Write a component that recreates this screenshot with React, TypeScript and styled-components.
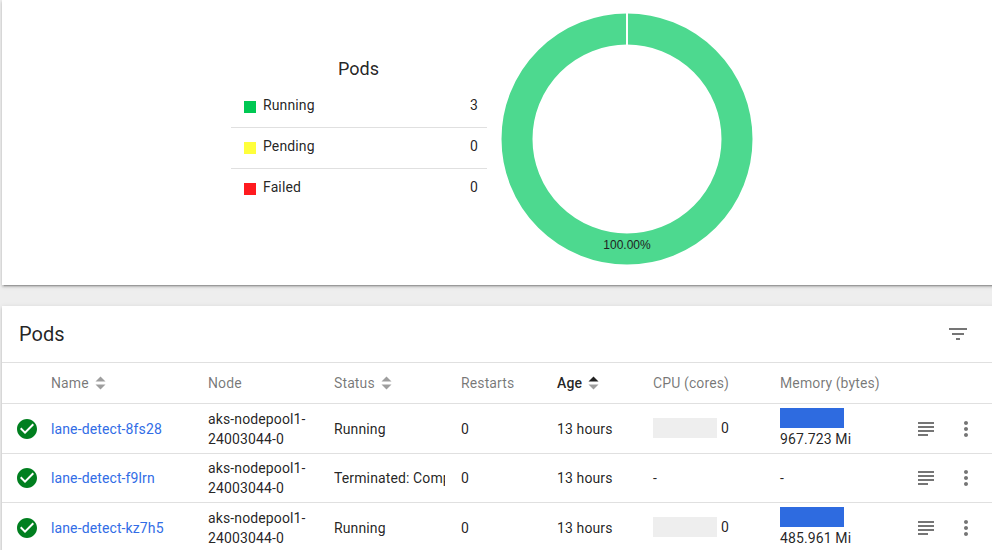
import React from "react";
import styled, { createGlobalStyle } from "styled-components";

const GlobalStyle = createGlobalStyle`
  html, body {
    margin: 0;
    padding: 0;
    height: 550px;
    overflow: hidden;
    background: #eeeeee;
    font-family: Roboto, "Liberation Sans", sans-serif;
    font-size: 14px;
    letter-spacing: 0.12px;
    color: rgba(0, 0, 0, 0.87);
  }
`;

const Page = styled.div`
  display: flex;
  flex-direction: column;
  gap: 21px;
  width: 1000px;
  height: 550px;
  padding-left: 2px;
  box-sizing: border-box;
  overflow: hidden;
`;

const Card = styled.section`
  background: #fff;
  box-shadow: 0 3px 1px -2px rgba(0, 0, 0, 0.2), 0 2px 2px 0 rgba(0, 0, 0, 0.14),
    0 1px 5px 0 rgba(0, 0, 0, 0.12);
`;

const ChartCard = styled(Card)`
  display: flex;
  align-items: flex-start;
  gap: 14px;
  height: 285px;
  flex: none;
  padding-left: 229px;
  box-sizing: border-box;
`;

const Legend = styled.div`
  width: 256px;
  margin-top: 55px;
`;

const LegendTitle = styled.div`
  font-size: 18px;
  line-height: 27px;
  text-align: center;
  letter-spacing: 0;
  margin: 0 1px 5px 0;
`;

const LegendRow = styled.div<{ $last?: boolean }>`
  display: flex;
  align-items: center;
  height: 40px;
  padding: 0 9px 0 13px;
  border-bottom: ${(p) => (p.$last ? "none" : "1px solid #e0e0e0")};
`;

const Swatch = styled.span<{ $color: string }>`
  width: 12px;
  height: 12px;
  margin: 0 7px 0 0;
  background: ${(p) => p.$color};
`;

const LegendLabel = styled.span`
  flex: 1;
  line-height: 20px;
  margin-bottom: 4px;
`;

const LegendCount = styled(LegendLabel)`
  flex: none;
`;

const Donut = styled.svg`
  display: block;
  flex: none;
  margin-top: 13px;
`;

const DonutLabel = styled.text`
  font-family: "Liberation Sans", Arial, sans-serif;
  font-size: 12px;
  letter-spacing: 0;
  fill: #222;
  text-anchor: middle;
`;

const TableCard = styled(Card)`
  flex: 1;
`;

const TitleBar = styled.header`
  display: flex;
  align-items: center;
  justify-content: space-between;
  height: 56px;
  padding: 0 30px 0 17px;
  border-bottom: 1px solid #e0e0e0;
`;

const Title = styled.h2`
  margin: 0;
  font-size: 20px;
  font-weight: 400;
  letter-spacing: 0;
`;

const Row = styled.div`
  display: grid;
  grid-template-columns: 49px 157px 126px 127px 96px 96px 127px 126px 40px 40px 1fr;
  align-items: center;
  padding: 4px 0;
  border-bottom: 1px solid #e0e0e0;
`;

const HeaderRow = styled(Row)`
  height: 40px;
  padding: 0;
`;

const HeaderCell = styled.div<{ $active?: boolean }>`
  display: flex;
  align-items: center;
  gap: 6px;
  color: ${(p) => (p.$active ? "rgba(0, 0, 0, 0.87)" : "rgba(0, 0, 0, 0.54)")};
  font-weight: ${(p) => (p.$active ? 500 : 400)};
`;

const StatusCell = styled.div`
  display: flex;
  justify-content: center;
  margin-left: 1px;
`;

const Cell = styled.div`
  line-height: 20px;
  min-width: 0;
`;

const ClippedCell = styled(Cell)`
  width: 111px;
  overflow: hidden;
  white-space: nowrap;
`;

const PodLink = styled.a`
  color: #326de6;
  text-decoration: none;
  cursor: pointer;
`;

const MetricBar = styled.div<{ $color: string }>`
  width: 64px;
  height: 20px;
  background: ${(p) => p.$color};
`;

const CpuCell = styled(Cell)`
  display: flex;
  align-items: center;
  gap: 4px;
  margin-bottom: 1px;
`;

const MemoryBar = styled(MetricBar)`
  margin-bottom: 1px;
`;

const ActionIcon = styled.svg`
  display: block;
  fill: rgba(0, 0, 0, 0.54);
`;

const ActionCell = styled.div`
  display: flex;
  justify-content: center;
`;

const CheckIcon = () => (
  <svg width="24" height="24" viewBox="0 0 24 24" fill="#007f1f">
    <path d="M12 2C6.48 2 2 6.48 2 12s4.48 10 10 10 10-4.48 10-10S17.52 2 12 2zm-2 15l-5-5 1.41-1.41L10 14.17l7.59-7.59L19 8l-9 9z" />
  </svg>
);

const SortIcon = ({ active }: { active?: boolean }) => (
  <svg width="11" height="14" viewBox="0 0 11 14">
    <path d="M5.5 0.5 10.5 5.5H0.5z" fill={active ? "rgba(0,0,0,0.87)" : "rgba(0,0,0,0.38)"} />
    <path d="M0.5 8.5H10.5L5.5 13.5z" fill="rgba(0,0,0,0.38)" />
  </svg>
);

const LogsIcon = () => (
  <ActionIcon width="24" height="24" viewBox="0 0 24 24">
    <path d="M14 17H4v2h10v-2zm6-8H4v2h16V9zM4 15h16v-2H4v2zM4 5v2h16V5H4z" />
  </ActionIcon>
);

const MoreIcon = () => (
  <ActionIcon width="24" height="24" viewBox="0 0 24 24">
    <path d="M12 8c1.1 0 2-.9 2-2s-.9-2-2-2-2 .9-2 2 .9 2 2 2zm0 2c-1.1 0-2 .9-2 2s.9 2 2 2 2-.9 2-2-.9-2-2-2zm0 6c-1.1 0-2 .9-2 2s.9 2 2 2 2-.9 2-2-.9-2-2-2z" />
  </ActionIcon>
);

const FilterIcon = () => (
  <ActionIcon width="24" height="24" viewBox="0 0 24 24">
    <path d="M10 18h4v-2h-4v2zM3 6v2h18V6H3zm3 7h12v-2H6v2z" />
  </ActionIcon>
);

const legend = [
  { label: "Running", color: "#00c853", count: 3 },
  { label: "Pending", color: "#ffff3b", count: 0 },
  { label: "Failed", color: "#ff1a1f", count: 0 },
];

const pods = [
  { name: "lane-detect-8fs28", status: "Running", memory: "967.723 Mi", metrics: true },
  { name: "lane-detect-f9lrn", status: "Terminated: Completed", memory: "-", metrics: false },
  { name: "lane-detect-kz7h5", status: "Running", memory: "485.961 Mi", metrics: true },
];

export default function App() {
  return (
    <>
      <GlobalStyle />
      <Page>
        <ChartCard>
          <Legend>
            <LegendTitle>Pods</LegendTitle>
            {legend.map((item, i) => (
              <LegendRow key={item.label} $last={i === legend.length - 1}>
                <Swatch $color={item.color} />
                <LegendLabel>{item.label}</LegendLabel>
                <LegendCount>{item.count}</LegendCount>
              </LegendRow>
            ))}
          </Legend>
          <Donut width="252" height="252" viewBox="0 0 252 252">
            <circle cx="126" cy="126" r="110" fill="none" stroke="#4dd98f" strokeWidth="31" />
            <rect x="125" y="0" width="2" height="32" fill="#fff" />
            <DonutLabel x="126" y="236">100.00%</DonutLabel>
          </Donut>
        </ChartCard>
        <TableCard>
          <TitleBar>
            <Title>Pods</Title>
            <FilterIcon />
          </TitleBar>
          <HeaderRow>
            <div />
            <HeaderCell>Name <SortIcon /></HeaderCell>
            <HeaderCell>Node</HeaderCell>
            <HeaderCell>Status <SortIcon /></HeaderCell>
            <HeaderCell>Restarts</HeaderCell>
            <HeaderCell $active>Age <SortIcon active /></HeaderCell>
            <HeaderCell>CPU (cores)</HeaderCell>
            <HeaderCell>Memory (bytes)</HeaderCell>
          </HeaderRow>
          {pods.map((pod) => (
            <Row key={pod.name}>
              <StatusCell><CheckIcon /></StatusCell>
              <Cell><PodLink>{pod.name}</PodLink></Cell>
              <Cell>aks-nodepool1-<br />24003044-0</Cell>
              <ClippedCell>{pod.status}</ClippedCell>
              <Cell>0</Cell>
              <Cell>13 hours</Cell>
              {pod.metrics ? (
                <CpuCell><MetricBar $color="#eeeeee" />0</CpuCell>
              ) : (
                <Cell>-</Cell>
              )}
              <Cell>
                {pod.metrics && <MemoryBar $color="#2e6be0" />}
                {pod.memory}
              </Cell>
              <ActionCell><LogsIcon /></ActionCell>
              <ActionCell><MoreIcon /></ActionCell>
            </Row>
          ))}
        </TableCard>
      </Page>
    </>
  );
}
